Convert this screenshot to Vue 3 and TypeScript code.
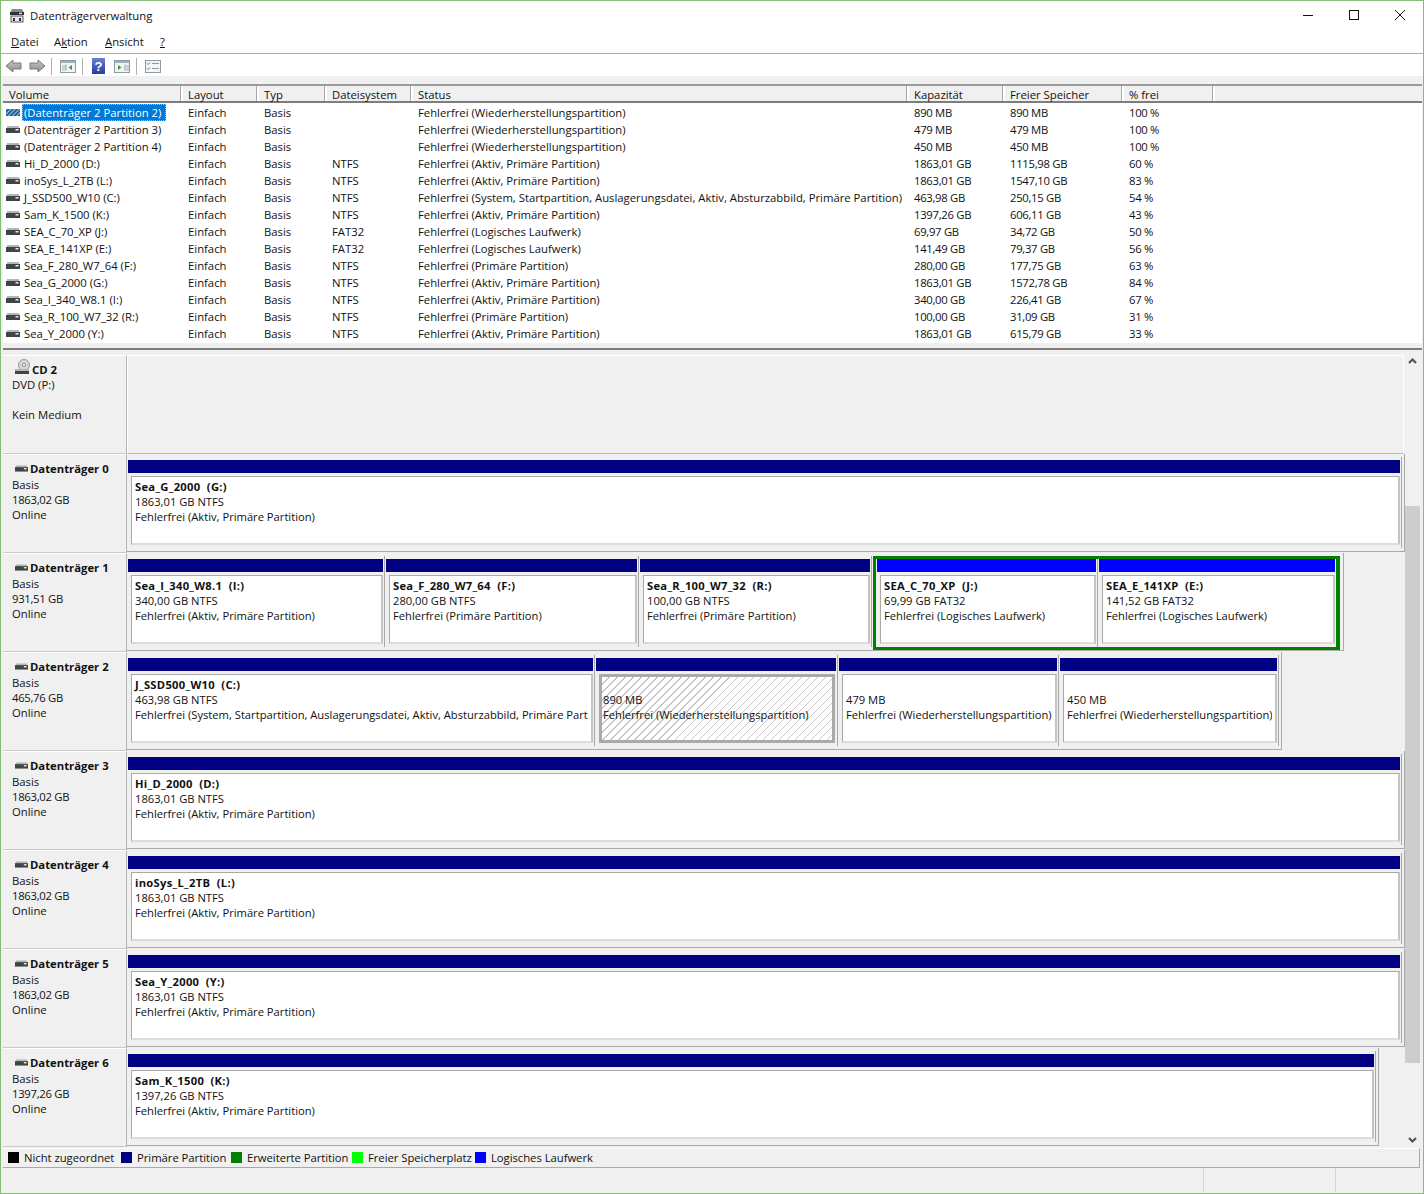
<script setup lang="ts">
interface Vol { n: string; f: string; s: string; k: string; fr: string; p: string }
const vols: Vol[] = [
  { n: '(Datenträger 2 Partition 2)', f: '', s: 'Fehlerfrei (Wiederherstellungspartition)', k: '890 MB', fr: '890 MB', p: '100 %' },
  { n: '(Datenträger 2 Partition 3)', f: '', s: 'Fehlerfrei (Wiederherstellungspartition)', k: '479 MB', fr: '479 MB', p: '100 %' },
  { n: '(Datenträger 2 Partition 4)', f: '', s: 'Fehlerfrei (Wiederherstellungspartition)', k: '450 MB', fr: '450 MB', p: '100 %' },
  { n: 'Hi_D_2000 (D:)', f: 'NTFS', s: 'Fehlerfrei (Aktiv, Primäre Partition)', k: '1863,01 GB', fr: '1115,98 GB', p: '60 %' },
  { n: 'inoSys_L_2TB (L:)', f: 'NTFS', s: 'Fehlerfrei (Aktiv, Primäre Partition)', k: '1863,01 GB', fr: '1547,10 GB', p: '83 %' },
  { n: 'J_SSD500_W10 (C:)', f: 'NTFS', s: 'Fehlerfrei (System, Startpartition, Auslagerungsdatei, Aktiv, Absturzabbild, Primäre Partition)', k: '463,98 GB', fr: '250,15 GB', p: '54 %' },
  { n: 'Sam_K_1500 (K:)', f: 'NTFS', s: 'Fehlerfrei (Aktiv, Primäre Partition)', k: '1397,26 GB', fr: '606,11 GB', p: '43 %' },
  { n: 'SEA_C_70_XP (J:)', f: 'FAT32', s: 'Fehlerfrei (Logisches Laufwerk)', k: '69,97 GB', fr: '34,72 GB', p: '50 %' },
  { n: 'SEA_E_141XP (E:)', f: 'FAT32', s: 'Fehlerfrei (Logisches Laufwerk)', k: '141,49 GB', fr: '79,37 GB', p: '56 %' },
  { n: 'Sea_F_280_W7_64 (F:)', f: 'NTFS', s: 'Fehlerfrei (Primäre Partition)', k: '280,00 GB', fr: '177,75 GB', p: '63 %' },
  { n: 'Sea_G_2000 (G:)', f: 'NTFS', s: 'Fehlerfrei (Aktiv, Primäre Partition)', k: '1863,01 GB', fr: '1572,78 GB', p: '84 %' },
  { n: 'Sea_I_340_W8.1 (I:)', f: 'NTFS', s: 'Fehlerfrei (Aktiv, Primäre Partition)', k: '340,00 GB', fr: '226,41 GB', p: '67 %' },
  { n: 'Sea_R_100_W7_32 (R:)', f: 'NTFS', s: 'Fehlerfrei (Primäre Partition)', k: '100,00 GB', fr: '31,09 GB', p: '31 %' },
  { n: 'Sea_Y_2000 (Y:)', f: 'NTFS', s: 'Fehlerfrei (Aktiv, Primäre Partition)', k: '1863,01 GB', fr: '615,79 GB', p: '33 %' },
]
const columns = ['Volume', 'Layout', 'Typ', 'Dateisystem', 'Status', 'Kapazität', 'Freier Speicher', '% frei', '']

interface Part { w: number; name?: string; size: string; st: string; hatch?: boolean }
interface Disk { name: string; size: string; parts: Part[]; logical?: Part[] }
const aa = 'Fehlerfrei (Aktiv, Primäre Partition)'
const pp = 'Fehlerfrei (Primäre Partition)'
const ll = 'Fehlerfrei (Logisches Laufwerk)'
const wh = 'Fehlerfrei (Wiederherstellungspartition)'
const disks: Disk[] = [
  { name: 'Datenträger 0', size: '1863,02 GB', parts: [{ w: 1275, name: 'Sea_G_2000  (G:)', size: '1863,01 GB NTFS', st: aa }] },
  { name: 'Datenträger 1', size: '931,51 GB',
    parts: [
      { w: 258, name: 'Sea_I_340_W8.1  (I:)', size: '340,00 GB NTFS', st: aa },
      { w: 254, name: 'Sea_F_280_W7_64  (F:)', size: '280,00 GB NTFS', st: pp },
      { w: 233, name: 'Sea_R_100_W7_32  (R:)', size: '100,00 GB NTFS', st: pp },
    ],
    logical: [
      { w: 222, name: 'SEA_C_70_XP  (J:)', size: '69,99 GB FAT32', st: ll },
      { w: 238, name: 'SEA_E_141XP  (E:)', size: '141,52 GB FAT32', st: ll },
    ] },
  { name: 'Datenträger 2', size: '465,76 GB', parts: [
      { w: 468, name: 'J_SSD500_W10  (C:)', size: '463,98 GB NTFS', st: 'Fehlerfrei (System, Startpartition, Auslagerungsdatei, Aktiv, Absturzabbild, Primäre Partition)' },
      { w: 243, size: '890 MB', st: wh, hatch: true },
      { w: 221, size: '479 MB', st: wh },
      { w: 220, size: '450 MB', st: wh },
    ] },
  { name: 'Datenträger 3', size: '1863,02 GB', parts: [{ w: 1275, name: 'Hi_D_2000  (D:)', size: '1863,01 GB NTFS', st: aa }] },
  { name: 'Datenträger 4', size: '1863,02 GB', parts: [{ w: 1275, name: 'inoSys_L_2TB  (L:)', size: '1863,01 GB NTFS', st: aa }] },
  { name: 'Datenträger 5', size: '1863,02 GB', parts: [{ w: 1275, name: 'Sea_Y_2000  (Y:)', size: '1863,01 GB NTFS', st: aa }] },
  { name: 'Datenträger 6', size: '1397,26 GB', parts: [{ w: 1249, name: 'Sam_K_1500  (K:)', size: '1397,26 GB NTFS', st: aa }] },
]
const legend = [
  { c: '#000000', t: 'Nicht zugeordnet' },
  { c: '#000080', t: 'Primäre Partition' },
  { c: '#008000', t: 'Erweiterte Partition' },
  { c: '#00ff00', t: 'Freier Speicherplatz' },
  { c: '#0000ff', t: 'Logisches Laufwerk' },
]
</script>

<template>
  <div class="window">
    <svg class="defs" width="0" height="0">
      <defs>
        <symbol id="drive" viewBox="0 0 14 7">
          <rect x="1" y="0" width="12" height="2" fill="#b5b5b5" />
          <rect x="0" y="2" width="14" height="5" fill="#3f4545" />
          <rect x="9.5" y="3" width="3" height="1.5" fill="#e8e8e8" />
        </symbol>
        <pattern id="hatchblue" width="3" height="3" patternUnits="userSpaceOnUse" patternTransform="rotate(45)">
          <rect width="3" height="3" fill="#1f5f98" />
          <rect width="1" height="3" fill="#9fc3e0" />
        </pattern>
        <linearGradient id="arrowfill" x1="0" y1="0" x2="0" y2="1">
          <stop offset="0" stop-color="#c4c4c4" />
          <stop offset="1" stop-color="#8f8f8f" />
        </linearGradient>
        <linearGradient id="helpfill" x1="0" y1="0" x2="0" y2="1">
          <stop offset="0" stop-color="#6b7fd0" />
          <stop offset="1" stop-color="#2b3c9a" />
        </linearGradient>
      </defs>
    </svg>

    <header class="title">
      <svg class="app-icon" width="16" height="15" viewBox="0 0 16 15">
        <path d="M3 1h10l2 4H1z" fill="#8a8a8a" />
        <rect x="1" y="4" width="14" height="3" fill="#2d3436" />
        <rect x="10" y="4.7" width="3" height="1.4" fill="#dfe8e0" />
        <rect x="2" y="8" width="12" height="6" fill="#e9e9e9" stroke="#5a5a5a" />
        <rect x="4" y="10" width="2" height="3" fill="#333" />
        <rect x="10" y="10" width="2" height="3" fill="#333" />
      </svg>
      <span class="title-text">Datenträgerverwaltung</span>
      <div class="caption">
        <svg width="46" height="12" viewBox="0 0 46 12"><path d="M18 6.5h10" stroke="#111" fill="none" /></svg>
        <svg width="46" height="12" viewBox="0 0 46 12"><rect x="18.5" y="1.5" width="9" height="9" stroke="#111" fill="none" /></svg>
        <svg width="46" height="12" viewBox="0 0 46 12"><path d="M18 1l10 10M28 1L18 11" stroke="#111" fill="none" /></svg>
      </div>
    </header>

    <nav class="menu">
      <span><u>D</u>atei</span>
      <span>A<u>k</u>tion</span>
      <span><u>A</u>nsicht</span>
      <span><u>?</u></span>
    </nav>

    <div class="toolbar">
      <svg class="tb-arrow" width="17" height="14" viewBox="0 0 17 14"><path d="M1 7l7-6v3h8v6H8v3z" fill="url(#arrowfill)" stroke="#7a7a7a" /></svg>
      <svg class="tb-arrow2" width="17" height="14" viewBox="0 0 17 14"><path d="M16 7l-7-6v3H1v6h8v3z" fill="url(#arrowfill)" stroke="#7a7a7a" /></svg>
      <i class="tb-sep s1"></i>
      <svg class="tb-i1" width="16" height="13" viewBox="0 0 16 13">
        <rect x="0.5" y="0.5" width="15" height="12" fill="#f4f4f4" stroke="#8c9aa3" />
        <rect x="1" y="1" width="14" height="2" fill="#9fb0ba" />
        <path d="M6 4.5v6" stroke="#8c9aa3" />
        <path d="M2 6h3M2 8h3M2 10h3" stroke="#9fb0ba" />
        <path d="M12 5v5L8.5 7.5z" fill="#3e9a3e" />
      </svg>
      <i class="tb-sep s2"></i>
      <svg class="tb-help" width="13" height="16" viewBox="0 0 13 16">
        <rect width="13" height="16" fill="url(#helpfill)" />
        <text x="6.5" y="13" text-anchor="middle" font-family="Liberation Sans, sans-serif" font-size="13" font-weight="700" fill="#fff">?</text>
      </svg>
      <svg class="tb-i2" width="16" height="13" viewBox="0 0 16 13">
        <rect x="0.5" y="0.5" width="15" height="12" fill="#f4f4f4" stroke="#8c9aa3" />
        <rect x="1" y="1" width="14" height="2" fill="#9fb0ba" />
        <path d="M11 4.5v6" stroke="#8c9aa3" />
        <path d="M12 6h3M12 8h3M12 10h3" stroke="#9fb0ba" />
        <path d="M4 5v5l3.5-2.5z" fill="#3e9a3e" />
      </svg>
      <i class="tb-sep s3"></i>
      <svg class="tb-i3" width="16" height="13" viewBox="0 0 16 13">
        <rect x="0.5" y="0.5" width="15" height="12" fill="#f6f6f6" stroke="#8c9aa3" />
        <path d="M2 3.5l1 1 2-2M2 8.5l1 1 2-2" stroke="#4a6fb5" fill="none" />
        <path d="M7 3.5h7M7 8.5h7" stroke="#8c9aa3" />
      </svg>
    </div>

    <div class="panes">
      <section class="volumes">
        <div class="head">
          <div v-for="(c, i) in columns" :key="i" class="hcell">{{ c }}</div>
        </div>
        <div class="list">
          <div v-for="(v, i) in vols" :key="v.n" class="row">
            <div class="c-vol">
              <svg v-if="i === 0" class="ico" width="14" height="7" viewBox="0 0 14 7"><rect width="14" height="7" fill="url(#hatchblue)" /></svg>
              <svg v-else class="ico" width="14" height="7"><use href="#drive" /></svg>
              <span class="vname" :class="{ sel: i === 0 }">{{ v.n }}</span>
            </div>
            <div class="cell">Einfach</div>
            <div class="cell">Basis</div>
            <div class="cell">{{ v.f }}</div>
            <div class="cell">{{ v.s }}</div>
            <div class="cell num">{{ v.k }}</div>
            <div class="cell num">{{ v.fr }}</div>
            <div class="cell num">{{ v.p }}</div>
          </div>
        </div>
      </section>

      <section class="lower">
        <div class="disks">
          <div class="disk">
            <div class="label">
              <div class="lname cdname">
                <svg class="disc" width="16" height="16" viewBox="0 0 16 16">
                  <circle cx="9" cy="6" r="5.5" fill="#d6d6d6" stroke="#9a9a9a" />
                  <circle cx="9" cy="6" r="1.6" fill="#fff" stroke="#8a8a8a" />
                  <rect x="0" y="10" width="14" height="2" fill="#b5b5b5" />
                  <rect x="0" y="12" width="14" height="3" fill="#3f4545" />
                </svg>
                <b>CD 2</b>
              </div>
              <div>DVD (P:)</div>
              <div>&nbsp;</div>
              <div>Kein Medium</div>
            </div>
            <div class="cd-area"></div>
          </div>

          <div v-for="d in disks" :key="d.name" class="disk">
            <div class="label">
              <div class="lname">
                <svg class="dicon" width="13" height="7" viewBox="0 0 14 7"><use href="#drive" /></svg>
                <b>{{ d.name }}</b>
              </div>
              <div>Basis</div>
              <div class="num">{{ d.size }}</div>
              <div>Online</div>
            </div>
            <div class="area">
              <div class="group">
                <div v-for="p in d.parts" :key="p.size" class="part" :style="{ width: p.w + 'px' }">
                  <div class="bar"></div>
                  <div class="box" :class="{ hatch: p.hatch }">
                    <div class="pname"><b v-if="p.name">{{ p.name }}</b><template v-else>&nbsp;</template></div>
                    <div class="pline">{{ p.size }}</div>
                    <div class="pline">{{ p.st }}</div>
                  </div>
                </div>
                <div v-if="d.logical" class="extended">
                  <div v-for="(p, j) in d.logical" :key="p.size" class="part log" :class="{ last: j === d.logical.length - 1 }" :style="{ width: p.w + 'px' }">
                    <div class="bar blue"></div>
                    <div class="box">
                      <div class="pname"><b>{{ p.name }}</b></div>
                      <div class="pline">{{ p.size }}</div>
                      <div class="pline">{{ p.st }}</div>
                    </div>
                  </div>
                </div>
              </div>
            </div>
          </div>
        </div>
        <div class="scroll">
          <svg width="15" height="10" viewBox="0 0 15 10"><path d="M4 7l3.5-3.5L11 7" stroke="#505050" stroke-width="2" fill="none" /></svg>
          <div class="track"><div class="thumb"></div></div>
          <svg width="15" height="10" viewBox="0 0 15 10"><path d="M4 3l3.5 3.5L11 3" stroke="#505050" stroke-width="2" fill="none" /></svg>
        </div>
      </section>

      <footer class="legend">
        <div v-for="l in legend" :key="l.t" class="leg">
          <i class="sw" :style="{ background: l.c }"></i>
          <span>{{ l.t }}</span>
        </div>
      </footer>
    </div>

    <div class="status">
      <i class="st st1"></i>
      <i class="st st2"></i>
    </div>
  </div>
</template>

<style scoped>
.window {
  width: 1424px;
  height: 1194px;
  box-sizing: border-box;
  border: 1px solid #86bb78;
  background: #fff;
  display: flex;
  flex-direction: column;
  font-family: "Open Sans", "Noto Sans", sans-serif;
  font-size: 11.3px;
  line-height: 15px;
  color: #111;
  overflow: hidden;
}
.defs { position: absolute; }
.title {
  height: 30px;
  box-sizing: border-box;
  flex: none;
  display: flex;
  align-items: center;
  padding: 0 0 2px 8px;
}
.app-icon { margin-right: 5px; }
.title-text { flex: 1; }
.caption { display: flex; width: 138px; }
.menu {
  height: 23px;
  flex: none;
  box-sizing: border-box;
  display: flex;
  align-items: center;
  padding: 0 0 1px 10px;
  border-bottom: 1px solid #a9a9a9;
}
.menu span:nth-child(1) { width: 43px; }
.menu span:nth-child(2) { width: 51px; }
.menu span:nth-child(3) { width: 55px; }
.toolbar {
  height: 22px;
  box-sizing: border-box;
  flex: none;
  display: flex;
  align-items: center;
  padding: 2px 0 0 4px;
}
.tb-arrow2 { margin-left: 7px; }
.tb-sep { width: 1px; height: 17px; background: #b0b0b0; display: block; }
.s1 { margin-left: 5px; }
.tb-i1 { margin-left: 8px; }
.s2 { margin-left: 6px; }
.tb-help { margin-left: 9px; }
.tb-i2 { margin-left: 9px; }
.s3 { margin-left: 6px; }
.tb-i3 { margin-left: 8px; }

.panes {
  flex: 1;
  min-height: 0;
  background: #f0f0f0;
  padding: 8px 1px 0 2px;
  display: flex;
  flex-direction: column;
}
.head, .row {
  display: grid;
  grid-template-columns: 178px 76px 68px 86px 496px 96px 119px 91px 1fr;
}
.head {
  height: 15px;
  border-top: 2px solid #9a9a9a;
  border-bottom: 2px solid #7d7d7d;
  background: #f0f0f0;
  box-sizing: content-box;
}
.hcell {
  padding-left: 7px;
  box-sizing: border-box;
  border-right: 2px solid #fff;
  box-shadow: inset -1px 0 0 #a8a8a8;
  margin-right: -2px;
  white-space: nowrap;
  line-height: 18px;
  height: 15px;
}
.hcell:first-child { padding-left: 6px; }
.hcell:last-child { border-right: none; box-shadow: none; margin-right: 0; }
.list { background: #fff; padding-top: 1px; height: 240px; box-sizing: border-box; }
.row { height: 17px; line-height: 17px; }
.c-vol { display: flex; align-items: center; padding-left: 3px; white-space: nowrap; }
.ico { margin-right: 2px; flex: none; }
.vname { padding: 0 5px 0 2px; height: 17px; }
.vname.sel { background: #0078d7; color: #fff; outline: 1px dotted #8fc4ef; outline-offset: -1px; }
.cell { padding-left: 7px; white-space: nowrap; }
.num { letter-spacing: -0.3px; }

.lower {
  margin-top: 5px;
  border-top: 2px solid #7d7d7d;
  flex: 1;
  min-height: 0;
  display: flex;
  padding-top: 5px;
}
.disks { width: 1402px; flex: none; }
.disk { height: 99px; display: flex; }
.label {
  width: 124px;
  box-sizing: border-box;
  flex: none;
  padding: 6px 0 0 9px;
  border-right: 1px solid #b4b4b4;
  border-bottom: 1px solid #c8c8c8;
  border-top: 1px solid #fff;
  white-space: nowrap;
}
.lname { display: flex; align-items: center; height: 15px; margin-bottom: 1px; }
.lname.cdname { margin-bottom: 0; }
.lname b { font-weight: 700; }
.dicon { margin: 0 2px 0 3px; }
.disc { margin: -5px 1px 0 3px; }
.cd-area {
  flex: 1;
  margin-right: 1px;
  border-left: 1px solid #fff;
  border-right: 1px solid #fff;
  border-top: 1px solid #fff;
  border-bottom: 1px solid #b8b8b8;
  box-sizing: border-box;
}
.area { flex: 1; min-width: 0; }
.group {
  display: inline-flex;
  align-items: flex-start;
  height: 98px;
  box-sizing: border-box;
  padding: 3px 2px 0 0;
  border-right: 1px solid #a9a9a9;
  border-bottom: 1px solid #a9a9a9;
  vertical-align: top;
}
.part {
  height: 91px;
  box-sizing: border-box;
  padding: 3px 1px 3px 1px;
  border-right: 1px solid #a9a9a9;
  flex: none;
}
.bar { height: 13px; background: #000080; margin-bottom: 3px; }
.bar.blue { background: #0000ff; }
.box {
  height: 69px;
  box-sizing: border-box;
  margin-left: 3px;
  background: #fff;
  border-top: 1px solid #a9a9a9;
  border-left: 1px solid #a9a9a9;
  border-right: 2px solid #c4c4c4;
  border-bottom: 2px solid #dcdcdc;
  padding: 2px 3px 0 3px;
  overflow: hidden;
  white-space: nowrap;
  font-size: 11.2px;
}
.box .pline { overflow: hidden; }
.box.hatch {
  border: 3px solid #a9a9a9;
  margin-right: 1px;
  padding: 0 0 0 1px;
  background: repeating-linear-gradient(135deg, transparent 0 4.9px, #c6c6c6 4.9px 5.66px), #fff;
}
.pname b { font-weight: 700; white-space: pre; letter-spacing: 0.3px; }
.extended {
  display: flex;
  box-sizing: border-box;
  height: 94px;
  margin: 0 1px;
  border: 3px solid #008000;
  border-right-width: 4px;
}
.part.log { height: 88px; padding-top: 0; }
.part.log.last { border-right: none; }

.scroll {
  width: 15px;
  flex: none;
  display: flex;
  flex-direction: column;
  margin-top: -5px;
  padding: 6px 0 3px;
  box-sizing: border-box;
}
.track { flex: 1; display: flex; flex-direction: column; padding: 140px 0 72px; }
.thumb { flex: 1; background: #cdcdcd; }
.legend {
  height: 20px;
  flex: none;
  box-sizing: border-box;
  border-top: 1px solid #fff;
  border-bottom: 1px solid #a9a9a9;
  border-right: 1px solid #a9a9a9;
  margin-right: 2px;
  display: flex;
  align-items: center;
  padding: 0 0 2px 5px;
}
.leg { display: flex; align-items: center; white-space: nowrap; letter-spacing: -0.04px; }
.leg:nth-child(1) { width: 113px; }
.leg:nth-child(2) { width: 110px; }
.leg:nth-child(3) { width: 121px; }
.leg:nth-child(4) { width: 123px; }
.sw { width: 11px; height: 11px; display: block; margin-right: 5px; }
.status {
  height: 25px;
  flex: none;
  background: #f0f0f0;
  display: flex;
  padding-left: 1202px;
}
.st { width: 1px; background: #d4d4d4; height: 24px; display: block; }
.st2 { margin-left: 131px; }
</style>
